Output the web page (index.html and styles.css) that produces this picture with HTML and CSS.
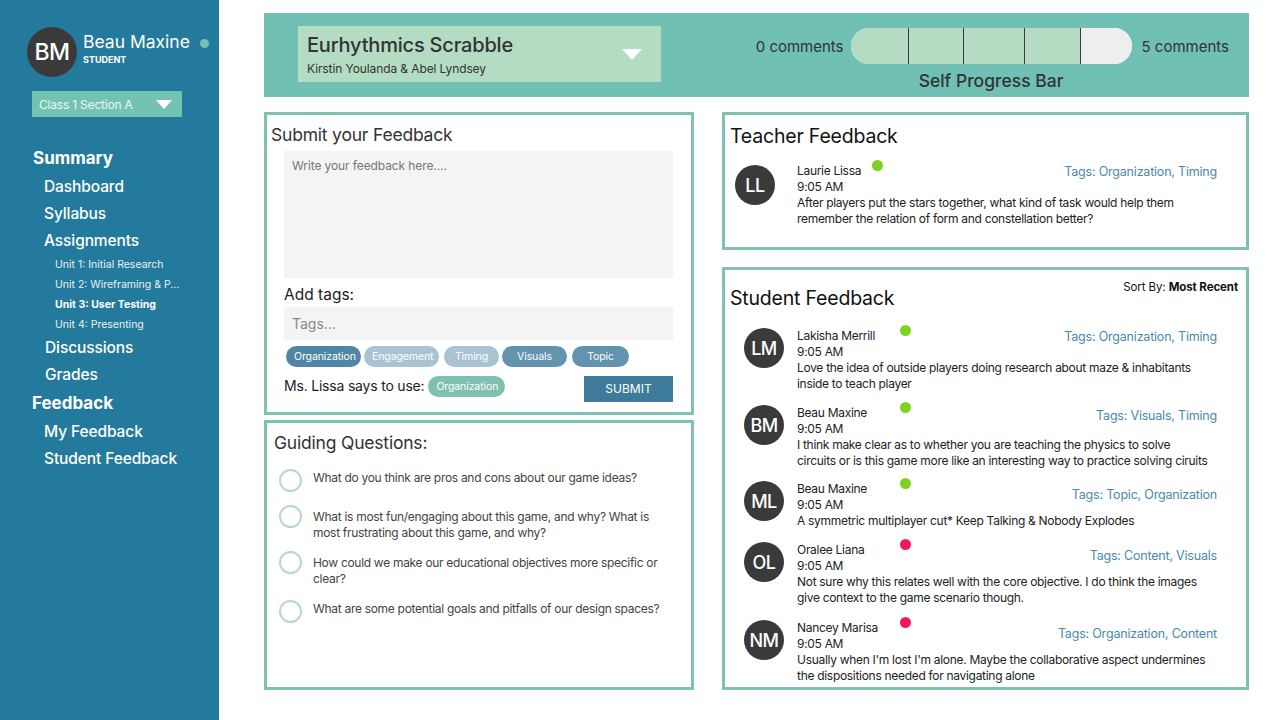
FILE: index.html
```html
<!DOCTYPE html>
<html lang="en">
<head>
<meta charset="utf-8">
<title>Feedback</title>
<link rel="stylesheet" href="styles.css">
</head>
<body>
<div class="app">
  <aside class="sidebar">
    <div class="user">
      <div class="avatar avatar-lg">BM</div>
      <div class="user-info">
        <div class="user-name">Beau Maxine</div>
        <div class="user-role">STUDENT</div>
      </div>
      <span class="online"></span>
    </div>
    <div class="class-select">
      <span>Class 1 Section A</span>
      <span class="tri tri-sm"></span>
    </div>
    <nav class="nav">
      <div class="nav-head">Summary</div>
      <div class="nav-item">Dashboard</div>
      <div class="nav-item">Syllabus</div>
      <div class="nav-item">Assignments</div>
      <div class="nav-sub">Unit 1: Initial Research</div>
      <div class="nav-sub">Unit 2: Wireframing &amp; P...</div>
      <div class="nav-sub active">Unit 3: User Testing</div>
      <div class="nav-sub">Unit 4: Presenting</div>
      <div class="nav-item nav-item2">Discussions</div>
      <div class="nav-item nav-item2">Grades</div>
      <div class="nav-head nav-head2">Feedback</div>
      <div class="nav-item">My Feedback</div>
      <div class="nav-item">Student Feedback</div>
    </nav>
  </aside>

  <main class="main">
    <header class="topbar">
      <div class="project-select">
        <div class="project-text">
          <div class="project-title">Eurhythmics Scrabble</div>
          <div class="project-sub">Kirstin Youlanda &amp; Abel Lyndsey</div>
        </div>
        <span class="tri tri-lg"></span>
      </div>
      <div class="progress">
        <span class="p-label">0 comments</span>
        <div class="bar">
          <span class="seg done" style="width:58px"></span>
          <span class="seg done" style="width:55px"></span>
          <span class="seg done" style="width:61px"></span>
          <span class="seg done" style="width:56px"></span>
          <span class="seg rest"></span>
        </div>
        <span class="p-label p-right">5 comments</span>
        <span class="p-caption">Self Progress Bar</span>
      </div>
    </header>

    <div class="content">
      <div class="col col-left">
        <section class="panel submit">
          <h2 class="submit-title">Submit your Feedback</h2>
          <div class="submit-body">
            <div class="textarea">Write your feedback here....</div>
            <div class="add-tags">Add tags:</div>
            <div class="tags-input">Tags...</div>
            <div class="chips">
              <span class="chip c-dark">Organization</span>
              <span class="chip c-light">Engagement</span>
              <span class="chip c-light c-timing">Timing</span>
              <span class="chip c-mid c-vis">Visuals</span>
              <span class="chip c-mid c-topic">Topic</span>
            </div>
            <div class="suggest-row">
              <span class="suggest">Ms. Lissa says to use:</span>
              <span class="chip c-teal">Organization</span>
              <span class="submit-btn">SUBMIT</span>
            </div>
          </div>
        </section>

        <section class="panel guide">
          <h2 class="guide-title">Guiding Questions:</h2>
          <ul class="questions">
            <li class="q"><span class="circle"></span><span>What do you think are pros and cons about our game ideas?</span></li>
            <li class="q q2"><span class="circle"></span><span>What is most fun/engaging about this game, and why? What is most frustrating about this game, and why?</span></li>
            <li class="q q3"><span class="circle"></span><span>How could we make our educational objectives more specific or clear?</span></li>
            <li class="q q4"><span class="circle"></span><span>What are some potential goals and pitfalls of our design spaces?</span></li>
          </ul>
        </section>
      </div>

      <div class="col col-right">
        <section class="panel teacher">
          <h2 class="fb-title">Teacher Feedback</h2>
          <div class="comment teacher-comment">
            <div class="avatar">LL</div>
            <div class="c-body">
              <div class="c-head">
                <span class="c-name c-name-t">Laurie Lissa</span>
                <span class="dot green"></span>
                <span class="c-tags">Tags: Organization, Timing</span>
              </div>
              <div class="c-time">9:05 AM</div>
              <div class="c-text">After players put the stars together, what kind of task would help them remember the relation of form and constellation better?</div>
            </div>
          </div>
        </section>

        <section class="panel student">
          <div class="student-head">
            <h2 class="fb-title">Student Feedback</h2>
            <div class="sort">Sort By: <b>Most Recent</b></div>
          </div>
          <div class="comments">
            <div class="comment">
              <div class="avatar">LM</div>
              <div class="c-body">
                <div class="c-head">
                  <span class="c-name">Lakisha Merrill</span>
                  <span class="dot green"></span>
                  <span class="c-tags">Tags: Organization, Timing</span>
                </div>
                <div class="c-time">9:05 AM</div>
                <div class="c-text">Love the idea of outside players doing research about maze &amp; inhabitants inside to teach player</div>
              </div>
            </div>
            <div class="comment">
              <div class="avatar">BM</div>
              <div class="c-body">
                <div class="c-head">
                  <span class="c-name">Beau Maxine</span>
                  <span class="dot green"></span>
                  <span class="c-tags t-low">Tags: Visuals, Timing</span>
                </div>
                <div class="c-time">9:05 AM</div>
                <div class="c-text">I think make clear as to whether you are teaching the physics to solve<br>circuits or is this game more like an interesting way to practice solving ciruits</div>
              </div>
            </div>
            <div class="comment c-short">
              <div class="avatar">ML</div>
              <div class="c-body">
                <div class="c-head">
                  <span class="c-name">Beau Maxine</span>
                  <span class="dot green"></span>
                  <span class="c-tags t-lower">Tags: Topic, Organization</span>
                </div>
                <div class="c-time">9:05 AM</div>
                <div class="c-text">A symmetric multiplayer cut* Keep Talking &amp; Nobody Explodes</div>
              </div>
            </div>
            <div class="comment">
              <div class="avatar">OL</div>
              <div class="c-body">
                <div class="c-head">
                  <span class="c-name">Oralee Liana</span>
                  <span class="dot red"></span>
                  <span class="c-tags t-lower">Tags: Content, Visuals</span>
                </div>
                <div class="c-time">9:05 AM</div>
                <div class="c-text">Not sure why this relates well with the core objective. I do think the images give context to the game scenario though.</div>
              </div>
            </div>
            <div class="comment">
              <div class="avatar">NM</div>
              <div class="c-body">
                <div class="c-head">
                  <span class="c-name">Nancey Marisa</span>
                  <span class="dot red"></span>
                  <span class="c-tags t-lower">Tags: Organization, Content</span>
                </div>
                <div class="c-time">9:05 AM</div>
                <div class="c-text">Usually when I'm lost I'm alone. Maybe the collaborative aspect undermines the dispositions needed for navigating alone</div>
              </div>
            </div>
          </div>
        </section>
      </div>
    </div>
  </main>
</div>
</body>
</html>
```

FILE: styles.css
```css
* { box-sizing: border-box; }
html, body { margin: 0; padding: 0; }
body {
  font-family: "Inter", "Noto Sans", "Liberation Sans", sans-serif;
  color: #333;
  background: #fff;
  width: 1280px;
  height: 720px;
  overflow: hidden;
}
h2 { margin: 0; font-weight: 400; }
ul { margin: 0; padding: 0; list-style: none; }

.app { display: flex; height: 720px; }

/* Sidebar */
.sidebar {
  width: 219px;
  flex: none;
  background: #247a9c;
  color: #fff;
  padding: 27px 0 0 0;
}
.user { display: flex; align-items: flex-start; padding-left: 27px; }
.avatar {
  width: 40px; height: 40px;
  border-radius: 50%;
  background: #3a3a3a;
  color: #fff;
  display: flex; align-items: center; justify-content: center;
  font-size: 18px;
  font-weight: 500;
  letter-spacing: -0.5px;
  flex: none;
}
.avatar-lg { width: 50px; height: 50px; font-size: 23px; }
.user-info { margin-left: 6px; margin-top: 4px; }
.user-name { font-size: 17.5px; line-height: 22px; letter-spacing: 0; }
.user-role { font-size: 9px; font-weight: 700; line-height: 11px; margin-top: 1px; }
.online {
  width: 9px; height: 9px; border-radius: 50%;
  background: #74c3b2;
  margin-left: 10px; margin-top: 12px;
}
.class-select {
  margin: 14px 0 0 32px;
  width: 150px; height: 26px;
  background: #74c3b2;
  display: flex; align-items: center; justify-content: space-between;
  padding: 1px 10px 0 7px;
  font-size: 12px;
  color: #eef6f4;
  letter-spacing: -0.2px;
}
.tri {
  width: 0; height: 0;
  border-left: 8px solid transparent;
  border-right: 8px solid transparent;
  border-top: 9px solid #fff;
}
.tri-lg { border-left-width: 10px; border-right-width: 10px; border-top-width: 11px; }

.nav { padding-top: 28px; }
.nav-head { font-size: 17px; font-weight: 700; line-height: 26px; padding-left: 33px; height: 28px; }
.nav-head2 { padding-left: 32px; height: 30px; line-height: 30px; }
.nav-item { font-size: 15.5px; font-weight: 500; line-height: 27px; height: 27px; padding-left: 44px; letter-spacing: -0.1px; }
.nav-item2 { padding-left: 45px; }
.nav-sub { font-size: 10.5px; line-height: 20px; height: 20px; padding-left: 55px; color: #e8f1f5; }
.nav-item + .nav-sub { margin-top: 1px; }
.nav-sub + .nav-item { margin-top: -1px; }
.nav-sub.active { font-weight: 700; color: #fff; }

/* Main */
.main { flex: 1; padding: 13px 31px 0 45px; }
.topbar {
  height: 84px;
  background: #70c0b3;
  display: flex;
  justify-content: space-between;
  padding: 13px 20px 0 34px;
}
.project-select {
  width: 363px; height: 56px;
  background: #b3dcc3;
  display: flex; justify-content: space-between; align-items: center;
  padding: 0 19px 0 9px;
}
.project-text { margin-top: 1px; }
.project-title { font-size: 20px; line-height: 24px; font-weight: 500; color: #333; letter-spacing: -0.2px; }
.project-sub { font-size: 12px; line-height: 16px; margin-top: 4px; color: #333; letter-spacing: -0.1px; }

.progress {
  display: grid;
  grid-template-columns: auto 281px auto;
  grid-template-rows: 36px auto;
  align-items: center;
  padding-top: 2px;
}
.p-label { font-size: 15px; color: #333; margin-right: 7px; letter-spacing: 0; }
.p-right { margin-right: 0; margin-left: 10px; }
.bar {
  height: 36px;
  border-radius: 18px;
  overflow: hidden;
  display: flex;
  background: #eeeeee;
}
.seg { height: 100%; }
.seg.done { background: #b3dcc3; border-right: 1px solid #3a3a3a; }
.seg.rest { flex: 1; background: #eeeeee; }
.p-caption {
  grid-column: 2;
  text-align: center;
  font-size: 17.5px;
  font-weight: 500;
  color: #333;
  line-height: 22px;
  margin-top: 1px;
}

.content {
  display: grid;
  grid-template-columns: 430px 527px;
  column-gap: 28px;
  margin-top: 15px;
}
.col { display: flex; flex-direction: column; }
.panel { border: 3px solid #80c1b3; background: #fff; }

/* Submit panel */
.submit { height: 303px; padding: 9px 18px 0 4px; }
.submit-title { font-size: 17.5px; line-height: 22px; color: #333; letter-spacing: -0.2px; }
.submit-body { padding-left: 13px; margin-top: 5px; }
.textarea {
  height: 127px;
  background: #f4f4f4;
  font-size: 12px;
  color: #777;
  padding: 7px 8px;
  letter-spacing: -0.1px;
}
.add-tags { font-size: 15.5px; line-height: 20px; margin-top: 7px; color: #222; }
.tags-input {
  height: 33px; margin-top: 2px;
  background: #f4f4f4;
  font-size: 14px; color: #888;
  padding: 0 8px; line-height: 33px;
}
.chips { display: flex; gap: 3px; margin-top: 6px; padding-left: 2px; }
.chip {
  height: 21px;
  border-radius: 11px;
  font-size: 10.5px;
  line-height: 21px;
  color: #fff;
  text-align: center;
  padding: 0 8px;
  letter-spacing: -0.1px;
  flex: none;
}
.c-dark { background: #4f86a6; width: 75px; }
.c-light { background: #a8c4d4; width: 75px; }
.c-timing { width: 55px; margin-left: 2px; }
.c-mid { background: #6293af; }
.c-vis { width: 65px; }
.c-topic { width: 57px; margin-left: 2px; }
.c-teal { background: #80c0b1; width: 77px; }
.suggest-row { display: flex; align-items: flex-start; margin-top: 9px; }
.suggest { font-size: 14px; line-height: 20px; color: #222; margin-right: 4px; letter-spacing: -0.2px; margin-top: 0; }
.submit-btn {
  margin-left: auto;
  width: 89px; height: 26px;
  background: #3d7a9b;
  color: #fff;
  font-size: 12px;
  text-align: center;
  line-height: 26px;
}

/* Guide panel */
.guide { margin-top: 5px; height: 270px; padding: 9px 10px 0 7px; }
.guide-title { font-size: 17.5px; line-height: 22px; color: #333; letter-spacing: -0.2px; }
.questions { margin-top: 16px; padding-left: 5px; }
.q {
  display: flex; align-items: flex-start;
  font-size: 12px; line-height: 16px; color: #444;
  letter-spacing: -0.3px;
  padding-right: 14px;
}
.q + .q { margin-top: 14px; }
.q2 { margin-top: 17px !important; }
.circle {
  width: 23px; height: 23px; flex: none;
  border: 2px solid #b3dcc3;
  border-radius: 50%;
  margin-right: 11px;
  margin-top: -1px;
}
.q2 .circle, .q3 .circle { margin-top: -4px; }

/* Feedback panels */
.fb-title { font-size: 19.5px; line-height: 26px; color: #111; letter-spacing: -0.2px; }
.teacher { height: 138px; padding: 8px 29px 0 5px; }
.teacher-comment { margin-top: 14px; padding-left: 5px; }
.student { margin-top: 17px; height: 423px; padding: 8px 8px 0 5px; }
.student-head { display: flex; justify-content: space-between; align-items: flex-start; }
.student-head .fb-title { margin-top: 7px; }
.sort { font-size: 11.5px; color: #111; margin-top: 2px; letter-spacing: -0.1px; }
.sort b { font-weight: 700; }
.comments { margin-top: 17px; padding-left: 14px; padding-right: 21px; }

.comment { display: grid; grid-template-columns: 40px 1fr; column-gap: 13px; }
.teacher-comment { column-gap: 22px; }
.comment + .comment { margin-top: 13px; }
.c-short { margin-top: 12px !important; }
.teacher-comment .avatar { margin-top: 2px; }
.c-body { font-size: 12px; line-height: 16px; color: #222; letter-spacing: -0.3px; }
.c-head { display: flex; height: 16px; align-items: flex-start; }
.c-name { width: 103px; flex: none; }
.c-name-t { width: 75px; }
.dot { width: 11px; height: 11px; border-radius: 50%; margin-top: -3px; flex: none; }
.dot.green { background: #7ed321; }
.dot.red { background: #f2185a; }
.c-tags { margin-left: auto; color: #4a89ad; font-size: 12.5px; margin-top: 1px; letter-spacing: -0.2px; }
.t-low { margin-top: 3px; }
.t-lower { margin-top: 6px; }
.c-short + .comment { margin-top: 13px; }
.c-short + .comment + .comment { margin-top: 14px; }
```
